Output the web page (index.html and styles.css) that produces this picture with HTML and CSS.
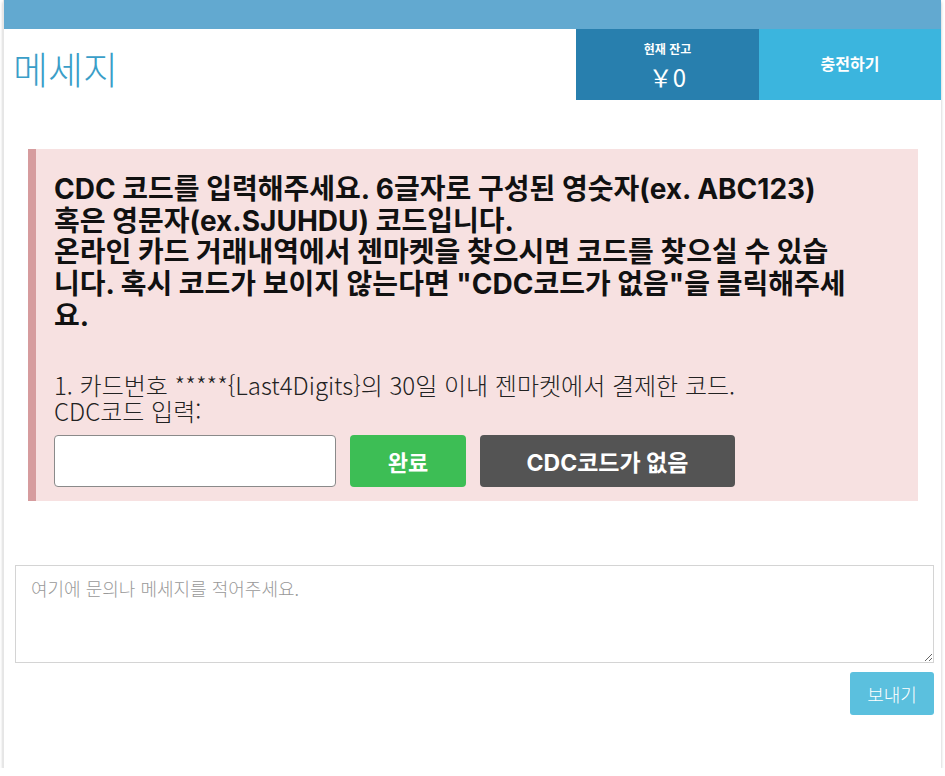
FILE: index.html
```html
<!DOCTYPE html>
<html lang="ko">
<head>
<meta charset="utf-8">
<title>메세지</title>
<link rel="stylesheet" href="styles.css">
</head>
<body>
<div class="card">
  <div class="topbar"></div>
  <div class="header">
    <h1 class="title">메세지</h1>
    <div class="balance">
      <div class="balance-label">현재 잔고</div>
      <div class="balance-value">￥0</div>
    </div>
    <div class="charge">충전하기</div>
  </div>
  <div class="content">
    <div class="alert">
      <p class="alert-heading">CDC 코드를 입력해주세요. 6글자로 구성된 영숫자(ex. ABC123)<br>혹은 영문자(ex.SJUHDU) 코드입니다.<br>온라인 카드 거래내역에서 젠마켓을 찾으시면 코드를 찾으실 수 있습<br>니다. 혹시 코드가 보이지 않는다면 "CDC코드가 없음"을 클릭해주세<br>요.</p>
      <p class="alert-text">1. 카드번호 *****{Last4Digits}의 30일 이내 젠마켓에서 결제한 코드.<br>CDC코드 입력:</p>
      <div class="form-row">
        <input class="code-input" type="text">
        <button class="btn btn-ok">완료</button>
        <button class="btn btn-none">CDC코드가 없음</button>
      </div>
    </div>
    <textarea class="message" placeholder="여기에 문의나 메세지를 적어주세요."></textarea>
    <div class="send-row">
      <button class="btn-send">보내기</button>
    </div>
  </div>
</div>
</body>
</html>
```

FILE: styles.css
```css
html, body {
  margin: 0;
  padding: 0;
  background: #ffffff;
}
body {
  font-family: "Noto Sans CJK KR", "Noto Sans", sans-serif;
}
.card {
  margin-left: 3px;
  width: 938px;
  height: 768px;
  background: #fff;
  border-left: 1px solid #e6e6e6;
  box-shadow: 0 2px 3px rgba(0,0,0,0.25);
  box-sizing: border-box;
}
.topbar {
  height: 29px;
  background: #62a9d0;
}
.header {
  display: flex;
  height: 71px;
}
.title {
  flex: 1;
  margin: 0;
  padding-left: 9px;
  font-size: 38px;
  font-weight: 300;
  color: #3a9ec8;
  line-height: 78px;
}
.balance {
  width: 183px;
  background: #287fae;
  color: #fff;
  display: flex;
  flex-direction: column;
  align-items: center;
  justify-content: flex-start;
  padding-top: 13px;
  box-sizing: border-box;
}
.balance-label {
  font-size: 12px;
  font-weight: 700;
  line-height: 14px;
}
.balance-value {
  font-size: 24px;
  line-height: 28px;
  margin-top: 7px;
}
.charge {
  width: 182px;
  background: #3bb5de;
  color: #fff;
  font-size: 16px;
  font-weight: 700;
  display: flex;
  align-items: center;
  justify-content: center;
  padding-bottom: 3px;
  box-sizing: border-box;
}
.content {
  padding: 49px 8px 0 11px;
}
.alert {
  margin-left: 13px;
  width: 890px;
  box-sizing: border-box;
  background: #f7e1e1;
  border-left: 8px solid #d69c9e;
  padding: 25px 20px 14px 18px;
}
.alert-heading {
  margin: 0;
  font-family: Inter, "Noto Sans CJK KR", sans-serif;
  font-weight: 700;
  font-size: 28px;
  line-height: 31.7px;
  color: #111;
  white-space: nowrap;
}
.alert-text {
  margin: 39.5px 0 0;
  font-size: 24px;
  font-weight: 300;
  line-height: 26px;
  color: #222;
}
.form-row {
  display: flex;
  gap: 14px;
  margin-top: 11px;
}
.code-input {
  width: 282px;
  height: 52px;
  box-sizing: border-box;
  border: 1px solid #8a8a8a;
  border-radius: 4px;
  background: #fff;
  margin: 0;
}
.btn {
  height: 52px;
  border: none;
  border-radius: 4px;
  color: #fff;
  font-family: Inter, "Noto Sans CJK KR", sans-serif;
  font-weight: 700;
  font-size: 22px;
  margin: 0;
}
.btn-ok {
  width: 116px;
  background: #3dbe55;
}
.btn-none {
  width: 255px;
  background: #545454;
  font-size: 23px;
}
.message {
  display: block;
  margin: 64px 0 0 0;
  width: 919px;
  height: 98px;
  box-sizing: border-box;
  border: 1px solid #d4d4d4;
  padding: 9px 15px;
  font-family: "Noto Sans CJK KR", sans-serif;
  font-size: 18px;
  font-weight: 300;
  resize: vertical;
}
.message::placeholder {
  color: #999;
}
.send-row {
  display: flex;
  justify-content: flex-end;
  margin-top: 9px;
  width: 919px;
}
.btn-send {
  width: 84px;
  height: 43px;
  border: none;
  border-radius: 3px;
  background: #5bc0de;
  color: #fff;
  font-family: "Noto Sans CJK KR", sans-serif;
  font-size: 18px;
  font-weight: 300;
}
```
